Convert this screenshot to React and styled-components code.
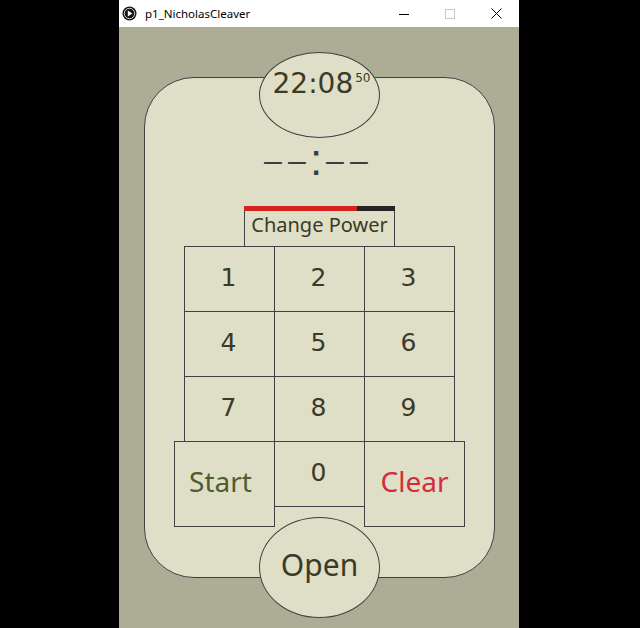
import React from "react";
import styled, { createGlobalStyle } from "styled-components";

const STROKE = "#3d4145";
const PANEL = "#dfdec6";
const BG = "#adac95";
const INK = "#3a3a26";
const READOUT = "#393d45";

const GlobalStyle = createGlobalStyle`
  html, body { margin: 0; padding: 0; background: #000; overflow: hidden; }
  #root { width: 640px; height: 628px; }
`;

const Screen = styled.div`
  width: 640px;
  height: 628px;
  background: #000;
  display: flex;
  padding-left: 119px;
  box-sizing: border-box;
`;

const Window = styled.div`
  width: 400px;
  height: 628px;
  display: flex;
  flex-direction: column;
`;

const TitleBar = styled.div`
  height: 27px;
  flex-shrink: 0;
  background: #fff;
  display: flex;
  align-items: center;
`;

const AppIcon = styled.svg`
  margin-left: 3px;
  flex-shrink: 0;
`;

const Title = styled.span`
  margin-left: 8px;
  font-family: "Noto Sans", sans-serif;
  font-size: 11.5px;
  color: #000;
  flex: 1;
  white-space: nowrap;
`;

const Controls = styled.div`
  display: flex;
  height: 100%;
`;

const ControlButton = styled.div`
  width: 46px;
  height: 100%;
  display: flex;
  align-items: center;
  justify-content: center;
`;

const Canvas = styled.div`
  flex: 1;
  background: ${BG};
  display: flex;
  flex-direction: column;
  align-items: flex-start;
`;

const Panel = styled.div`
  margin: 50px 0 0 25px;
  width: 351px;
  height: 501px;
  box-sizing: border-box;
  border: 1px solid ${STROKE};
  border-radius: 50px;
  background: ${PANEL};
  display: flex;
  flex-direction: column;
  align-items: center;
  flex-shrink: 0;
`;

const Clock = styled.div`
  margin-top: -26px;
  width: 121px;
  height: 86px;
  flex-shrink: 0;
  box-sizing: border-box;
  border: 1px solid ${STROKE};
  border-radius: 50%;
  background: ${PANEL};
  display: flex;
  justify-content: center;
  align-items: flex-start;
  padding-top: 17px;
  padding-left: 4px;
`;

const TimeRow = styled.div`
  display: flex;
  align-items: flex-start;
  font-family: "DejaVu Sans", sans-serif;
  color: ${INK};
`;

const Time = styled.span`
  font-size: 28px;
  line-height: 1;
`;

const Seconds = styled.span`
  font-size: 12px;
  line-height: 1;
  margin-top: 2px;
  margin-left: 2px;
`;

const Readout = styled.div`
  margin-right: 7px;
  height: 44px;
  display: flex;
  align-items: flex-start;
  color: ${READOUT};
  white-space: pre;
`;

const Dash = styled.span`
  margin-top: 6px;
  width: 18px;
  display: flex;
  justify-content: center;
  font-family: "Liberation Sans", sans-serif;
  font-size: 32px;
  line-height: 1;
  margin-left: ${(p) => (p.$gap ? "6px" : "0")};
`;

const Colon = styled.span`
  width: 20px;
  display: flex;
  justify-content: center;
  font-family: "Liberation Sans", sans-serif;
  font-size: 44px;
  line-height: 1;
`;

const Power = styled.div`
  margin-top: 24px;
  width: 151px;
  display: flex;
  flex-direction: column;
`;

const Meter = styled.div`
  height: 5px;
  display: flex;
`;

const MeterFill = styled.div`
  flex: none;
  background: #d2231c;
`;

const MeterRest = styled.div`
  flex: 1;
  background: #232323;
`;

const PowerLabel = styled.div`
  height: 35px;
  box-sizing: border-box;
  border-left: 1px solid ${STROKE};
  border-right: 1px solid ${STROKE};
  padding-top: 4px;
  text-align: center;
  font-family: "Noto Sans", sans-serif;
  font-size: 20px;
  line-height: 1;
  color: ${INK};
`;

const Keypad = styled.div`
  display: grid;
  grid-template-columns: repeat(3, 90px);
  grid-auto-rows: 65px;
  border-left: 1px solid ${STROKE};
  border-top: 1px solid ${STROKE};
`;

const Key = styled.div`
  box-sizing: border-box;
  border-right: 1px solid ${STROKE};
  border-bottom: 1px solid ${STROKE};
  display: flex;
  align-items: center;
  justify-content: center;
  padding-bottom: 3px;
  padding-right: 2px;
  font-family: "DejaVu Sans", sans-serif;
  font-size: 25px;
  line-height: 1;
  color: ${INK};
`;

const BottomRow = styled.div`
  margin-top: -1px;
  display: flex;
  align-items: flex-start;
`;

const ActionKey = styled.div`
  width: 101px;
  height: 86px;
  box-sizing: border-box;
  border: 1px solid ${STROKE};
  display: flex;
  align-items: center;
  justify-content: center;
  padding-bottom: 7px;
  padding-right: ${(p) => (p.$shift ? "8px" : "0")};
  font-family: "Noto Sans", sans-serif;
  font-size: 28px;
  line-height: 1;
  color: ${(p) => p.$color};
`;

const ZeroKey = styled.div`
  width: 89px;
  height: 66px;
  box-sizing: border-box;
  border-top: 1px solid ${STROKE};
  border-bottom: 1px solid ${STROKE};
  display: flex;
  align-items: center;
  justify-content: center;
  padding-bottom: 3px;
  padding-right: 2px;
  font-family: "DejaVu Sans", sans-serif;
  font-size: 25px;
  line-height: 1;
  color: ${INK};
`;

const OpenButton = styled.div`
  margin-top: -10px;
  width: 121px;
  height: 101px;
  flex-shrink: 0;
  box-sizing: border-box;
  border: 1px solid ${STROKE};
  border-radius: 50%;
  background: ${PANEL};
  display: flex;
  align-items: center;
  justify-content: center;
  padding-bottom: 6px;
  font-family: "Noto Sans", sans-serif;
  font-size: 30px;
  line-height: 1;
  color: ${INK};
`;

const digits = ["1", "2", "3", "4", "5", "6", "7", "8", "9"];

export default function App() {
  const power = 113 / 151;
  return (
    <>
      <GlobalStyle />
      <Screen>
        <Window>
          <TitleBar>
            <AppIcon width="15" height="15" viewBox="0 0 15 15">
              <circle cx="7.5" cy="7.5" r="7" fill="#141414" />
              <circle cx="7.5" cy="7.5" r="5.2" fill="none" stroke="#fff" strokeWidth="0.8" />
              <path d="M5.8 4.6 L10.4 7.5 L5.8 10.4 Z" fill="#fff" />
            </AppIcon>
            <Title>p1_NicholasCleaver</Title>
            <Controls>
              <ControlButton>
                <svg width="10" height="10" viewBox="0 0 10 10">
                  <line x1="0" y1="5.5" x2="10" y2="5.5" stroke="#000" strokeWidth="1" />
                </svg>
              </ControlButton>
              <ControlButton>
                <svg width="10" height="10" viewBox="0 0 10 10">
                  <rect x="0.5" y="0.5" width="9" height="9" fill="none" stroke="#c8c8c8" strokeWidth="1" />
                </svg>
              </ControlButton>
              <ControlButton>
                <svg width="11" height="11" viewBox="0 0 11 11">
                  <path d="M0.5 0.5 L10.5 10.5 M10.5 0.5 L0.5 10.5" stroke="#000" strokeWidth="1" />
                </svg>
              </ControlButton>
            </Controls>
          </TitleBar>
          <Canvas>
            <Panel>
              <Clock>
                <TimeRow>
                  <Time>22:08</Time>
                  <Seconds>50</Seconds>
                </TimeRow>
              </Clock>
              <Readout aria-label="--:--">
                <Dash>–</Dash>
                <Dash $gap>–</Dash>
                <Colon>:</Colon>
                <Dash>–</Dash>
                <Dash $gap>–</Dash>
              </Readout>
              <Power>
                <Meter>
                  <MeterFill style={{ width: `${power * 100}%` }} />
                  <MeterRest />
                </Meter>
                <PowerLabel>Change Power</PowerLabel>
              </Power>
              <Keypad>
                {digits.map((d) => (
                  <Key key={d}>{d}</Key>
                ))}
              </Keypad>
              <BottomRow>
                <ActionKey $color="#4e5c2e" $shift>Start</ActionKey>
                <ZeroKey>0</ZeroKey>
                <ActionKey $color="#d42b3d">Clear</ActionKey>
              </BottomRow>
              <OpenButton>Open</OpenButton>
            </Panel>
          </Canvas>
        </Window>
      </Screen>
    </>
  );
}
